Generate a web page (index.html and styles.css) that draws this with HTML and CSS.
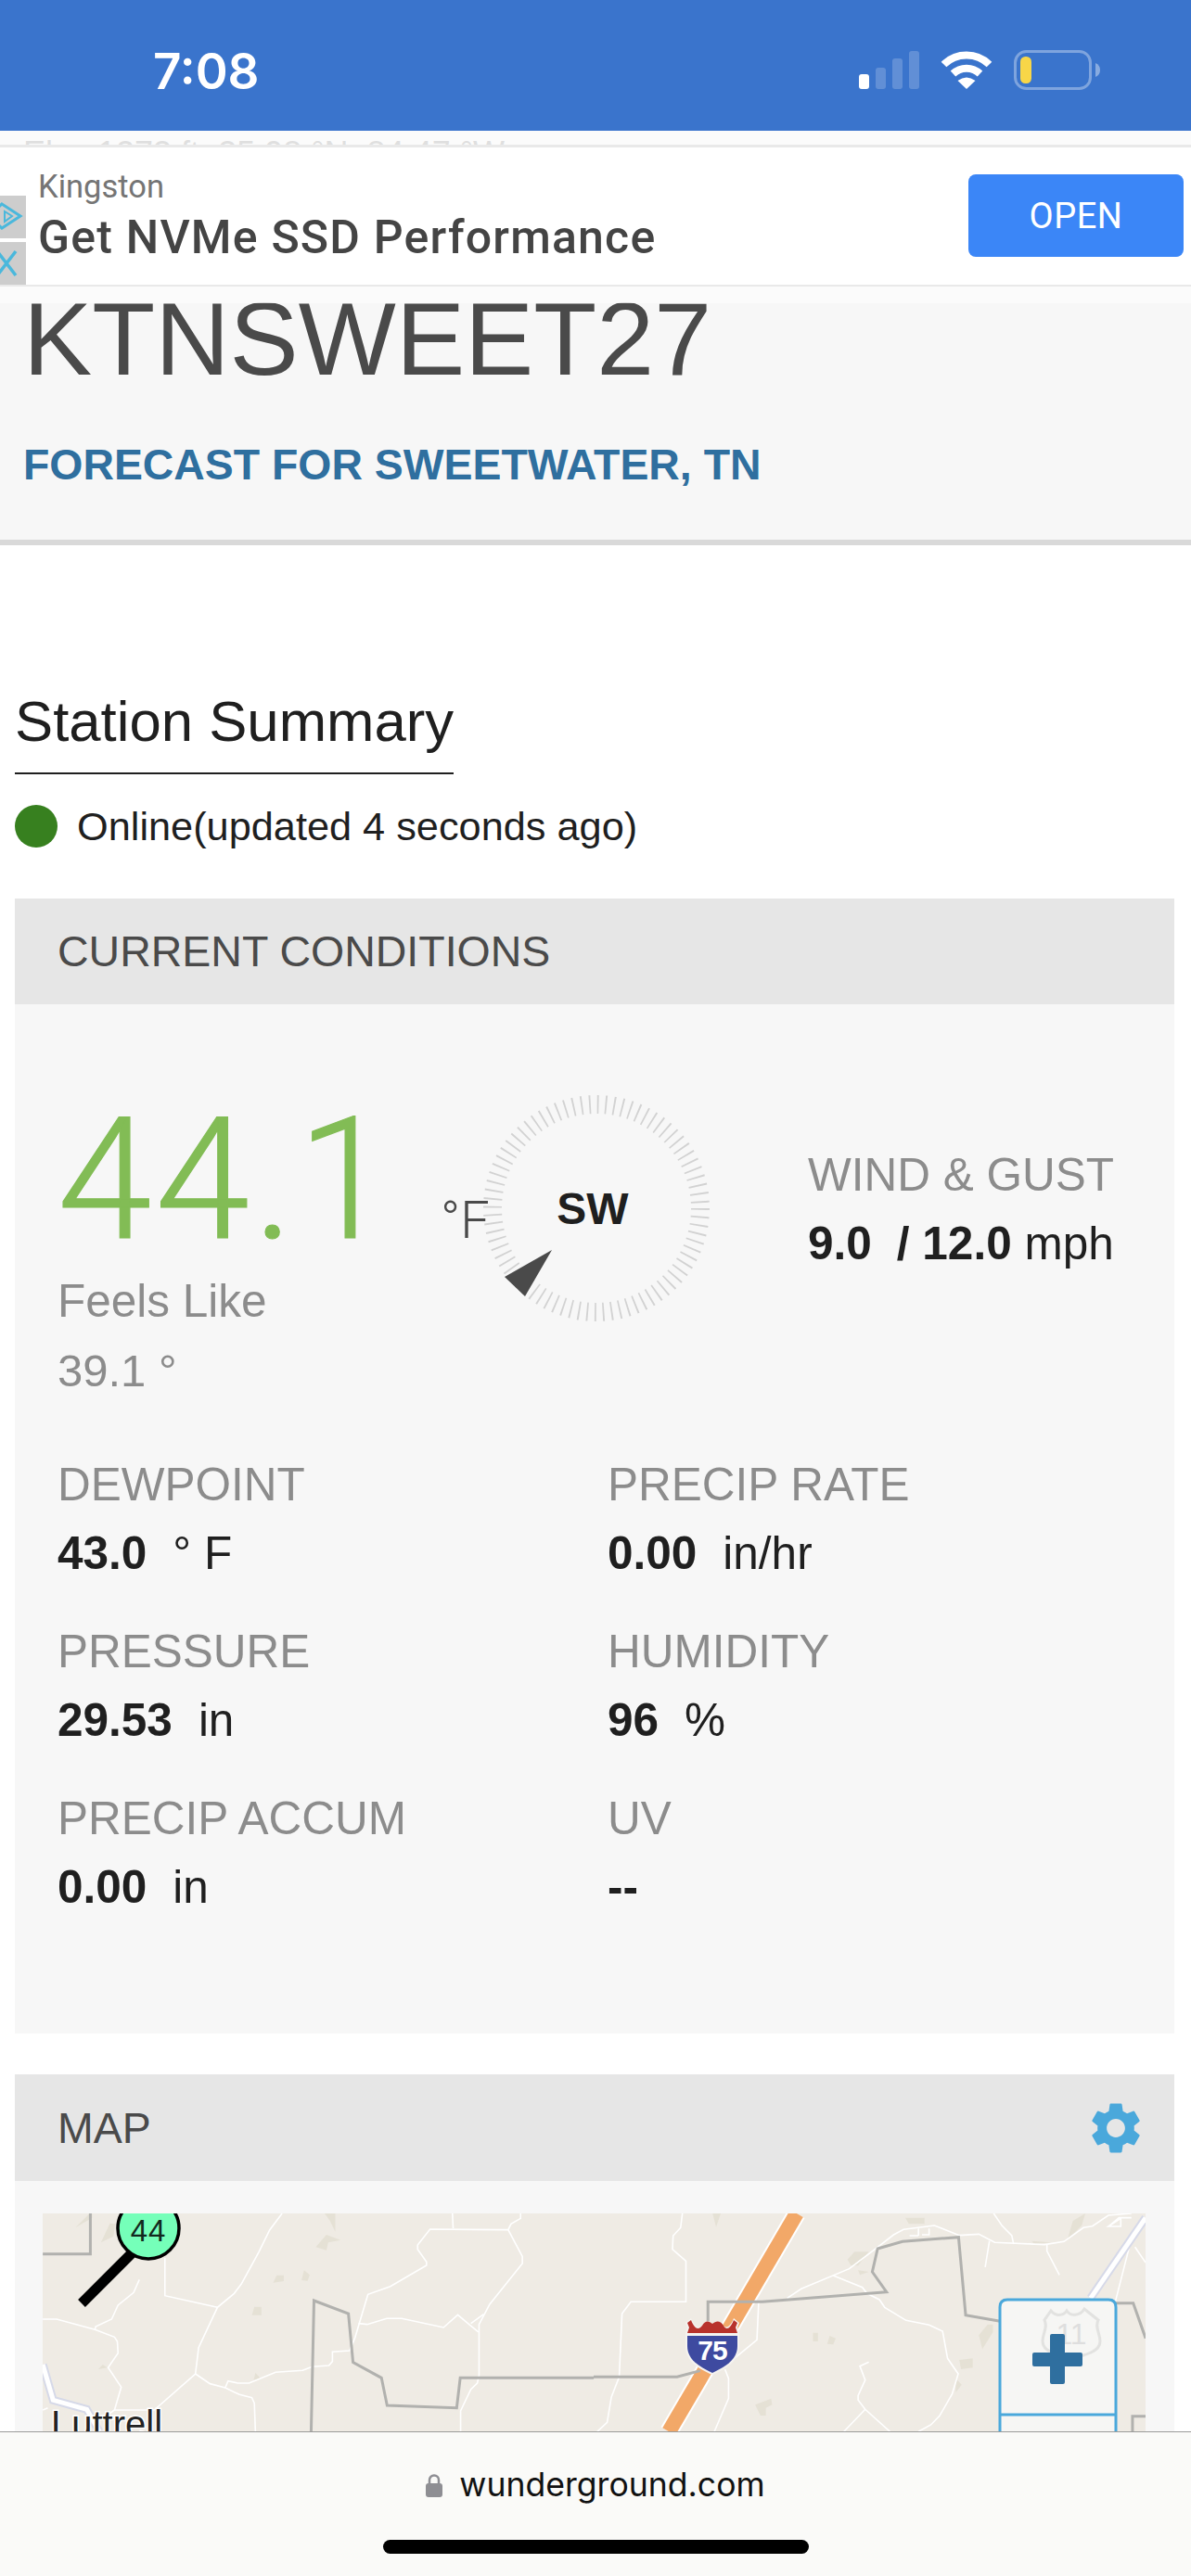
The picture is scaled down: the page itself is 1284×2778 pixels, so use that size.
FILE: index.html
```html
<!DOCTYPE html>
<html lang="en">
<head>
<meta charset="utf-8">
<title>KTNSWEET27</title>
<link rel="stylesheet" href="styles.css">
</head>
<body>
<header class="status">
  <span class="time">7:08</span>
  <div class="status-icons">
    <svg class="signal" width="65" height="41" viewBox="0 0 65 41">
      <rect class="bar-on" x="0" y="25" width="11" height="16" rx="3"/>
      <rect class="bar-off" x="18" y="18" width="11" height="23" rx="3"/>
      <rect class="bar-off" x="36" y="8" width="11" height="33" rx="3"/>
      <rect class="bar-off" x="54" y="0" width="11" height="41" rx="3"/>
    </svg>
    <svg class="wifi" width="58" height="42" viewBox="0 0 58 42">
      <path d="M4.500 15.500A35 35 0 0 1 53.500 15.500" fill="none" stroke="#fff" stroke-width="8"/>
      <path d="M14.500 25.500A21 21 0 0 1 43.500 25.500" fill="none" stroke="#fff" stroke-width="8"/>
      <path d="M29 42L19.500 33Q29 26 38.500 33Z" fill="#fff"/>
    </svg>
    <svg class="battery" width="93" height="43" viewBox="0 0 93 43">
      <rect x="1.500" y="1.500" width="81" height="40" rx="12" fill="none" stroke="#fff" stroke-opacity=".35" stroke-width="3"/>
      <rect x="7" y="7" width="12" height="29" rx="5.500" fill="#f8d648"/>
      <path d="M88 14Q93 16 93 21.500Q93 27 88 29Z" fill="#fff" fill-opacity=".4"/>
    </svg>
  </div>
</header>

<section class="station-head">
  <p class="elev">Elev 1273 ft, 35.98 °N, 84.47 °W</p>
  <h1 class="station-id">KTNSWEET27</h1>
  <a class="forecast-link">FORECAST FOR SWEETWATER, TN</a>
</section>

<main class="content">
  <h2 class="summary-title">Station Summary</h2>
  <div class="online"><span class="online-dot"></span><span>Online(updated 4 seconds ago)</span></div>

  <section class="panel">
    <h3 class="panel-head">CURRENT CONDITIONS</h3>
    <div class="conditions">
      <div class="top-row">
        <div class="temp-col">
          <div class="temp">44.1</div>
          <div class="label">Feels Like</div>
          <div class="feels">39.1 °</div>
        </div>
        <div class="compass">
          <svg width="250" height="250" viewBox="0 0 250 250">
            <circle class="ticks" cx="125" cy="125" r="112"/>
            <path class="needle" d="M77 170L26 199L48 220Z"/>
            <text class="compass-dir" x="121" y="142" text-anchor="middle">SW</text>
          </svg>
          <span class="temp-unit">°F</span>
        </div>
        <div class="wind-col">
          <div class="label">WIND &amp; GUST</div>
          <div class="value"><b>9.0</b><b class="gust">/ 12.0</b> <span>mph</span></div>
        </div>
      </div>
      <div class="stats">
        <div class="stat"><div class="label">DEWPOINT</div><div class="value"><b>43.0</b><span class="unit">° F</span></div></div>
        <div class="stat"><div class="label">PRECIP RATE</div><div class="value"><b>0.00</b><span class="unit">in/hr</span></div></div>
        <div class="stat"><div class="label">PRESSURE</div><div class="value"><b>29.53</b><span class="unit">in</span></div></div>
        <div class="stat"><div class="label">HUMIDITY</div><div class="value"><b>96</b><span class="unit">%</span></div></div>
        <div class="stat"><div class="label">PRECIP ACCUM</div><div class="value"><b>0.00</b><span class="unit">in</span></div></div>
        <div class="stat"><div class="label">UV</div><div class="value"><b>--</b></div></div>
      </div>
    </div>
  </section>

  <section class="panel map-panel">
    <h3 class="panel-head">MAP
      <svg class="gear" width="66" height="66" viewBox="0 0 24 24"><path d="M19.140 12.940c.04-.3.06-.61.06-.94 0-.32-.02-.64-.07-.94l2.030-1.580c.18-.14.23-.41.12-.61l-1.920-3.320c-.12-.22-.37-.29-.59-.22l-2.390.96c-.5-.38-1.030-.7-1.620-.94l-.36-2.540c-.04-.24-.24-.41-.48-.41h-3.840c-.24 0-.43.17-.47.41l-.36 2.540c-.59.24-1.130.57-1.620.94l-2.390-.96c-.22-.08-.47 0-.59.22L2.740 8.870c-.12.21-.08.47.12.61l2.030 1.580c-.05.3-.09.63-.09.94s.02.64.07.94l-2.030 1.580c-.18.14-.23.41-.12.61l1.920 3.320c.12.22.37.29.59.22l2.390-.96c.5.38 1.030.7 1.620.94l.36 2.540c.05.24.24.41.48.41h3.840c.24 0 .44-.17.47-.41l.36-2.540c.59-.24 1.130-.56 1.620-.94l2.390.96c.22.08.47 0 .59-.22l1.920-3.320c.12-.22.07-.47-.12-.61l-2.010-1.580zM12 15.600c-1.980 0-3.600-1.620-3.600-3.600s1.620-3.600 3.600-3.600 3.600 1.620 3.600 3.600-1.620 3.600-3.600 3.600z"/></svg>
    </h3>
    <div class="map-wrap">
      <svg class="map" width="1189" height="300" viewBox="46 2387 1189 300">
        <rect x="46" y="2387" width="1189" height="300" fill="#efebe4"/>
        <g transform="translate(40 2375) scale(.3827 .3333)">
          <path class="land" d="M810 36L840 36V95L825 60ZM785 145L815 105L855 122L820 130L815 155ZM665 260L675 236H695V255ZM745 252L752 220L768 235L762 254ZM605 365L612 338H632V365ZM180 130L205 68L220 70L215 110ZM108 82L145 40L155 36V50ZM172 540L185 525L198 535ZM610 575L615 552L630 570Z"/>
          <path class="road" d="M690 36L655 90L625 160L575 265L555 295L508 340L455 470L446 555L330 672L218 672"/>
          <path class="road" d="M360 180V302L508 340"/>
          <path class="road" d="M288 250L272 292L228 333L210 378L165 402L163 412"/>
          <path class="road" d="M16 378H55L163 412L218 436L226 450L228 488L200 535L237 598L218 672L190 695"/>
          <path class="road" d="M446 555L487 587L530 600L570 622L605 632L612 650L615 742"/>
          <path class="road" d="M530 600L538 578L565 585H597L672 550L748 544L775 532L822 528L832 515V484L880 480L895 440L932 298L995 272L1097 204V193L1072 152V138L1107 87L1327 89L1367 175V198L1275 330L1245 395V560L1240 585L1222 605L1193 675V742"/>
          <path class="road" d="M1170 36L1172 85M1362 36V52L1335 70L1327 89M1222 392L1258 362M16 672L30 665"/>
          <path class="road" d="M905 392L930 395L985 376H1027L1145 405L1185 364L1243 420"/>
          <path class="highway-edge" d="M16 525L45 640L140 670L175 742"/>
          <path class="highway" d="M16 525L45 640L140 670L175 742"/>
          <path class="border" d="M16 167H150V36"/>
          <path class="border" d="M772 742L780 318L877 360L890 518L970 568L986 657L1182 665L1192 568H1568"/>
        </g>
        <g transform="translate(640 2375) scale(.3827 .3333)">
          <path class="land" d="M335 36H358L345 80ZM878 50H932V70H888ZM715 185L735 160H775L745 205H725ZM745 220L775 225L750 235ZM1340 100L1350 60L1385 36L1375 75L1335 120ZM1235 125L1290 130L1240 135ZM618 422H632V450H618ZM658 458L665 432L682 440L675 460ZM1085 430L1110 395H1125V420L1095 475ZM1030 510L1068 505V535L1035 540ZM455 655L500 635L503 655L485 665V690H470ZM1020 570L1037 590L1020 615Z"/>
          <path class="road" d="M250 36L245 82L224 108L222 152L260 190V322H105L80 360L72 565L50 630L38 712L10 742"/>
          <path class="road" d="M465 322L460 445L370 530M370 540L380 570V635L340 742"/>
          <path class="road" d="M545 310L585 280L720 215L800 145L845 105L873 88L960 75L1030 107L1085 103L1130 130L1270 137L1325 127L1380 82L1405 77L1450 42L1515 36"/>
          <path class="road" d="M675 237L757 275L770 295L805 315L820 340L880 382L945 397L983 417L997 505L1027 555L1010 620L975 690L950 720L915 742"/>
          <path class="road" d="M775 517L750 530L765 575L745 625V640L765 670L835 742M765 670L705 742"/>
          <path class="road" d="M1115 125L1103 210M1277 137V158L1312 235M1127 36L1150 75L1178 108L1183 135"/>
          <path class="road" d="M915 108V85M890 108H915M945 85V105H925M1450 78L1480 50H1515M1485 52V78H1450Z"/>
          <path class="road" d="M1510 140L1470 320M1525 145L1555 195"/>
          <path class="interstate-edge" d="M572 36L212 742"/>
          <path class="interstate" d="M572 36L212 742"/>
          <path class="border" d="M0 565H235L300 545"/>
          <path class="border" d="M322 385V322H475L825 290L785 225L800 150L870 127L1028 113L1048 365L1145 385"/>
          <path class="highway-edge" d="M1400 310L1555 50"/>
          <path class="highway" d="M1400 310L1555 50"/>
          <path class="border" d="M1470 326H1520L1555 440M1555 692H1518V742"/>
        </g>

        <path class="pin-stem" d="M142 2430L88 2484"/>
        <circle class="pin-head" cx="160" cy="2403" r="33"/>
        <text class="pin-text" x="160" y="2417" text-anchor="middle">44</text>
        <text class="town" x="55" y="2628">Luttrell</text>

        <path class="shield-edge" d="M768 2561C752 2554 739 2546 739 2530V2516L741 2510L739 2505L745 2500C749 2510 753 2511 757 2508C761 2511 775 2511 780 2508C783 2511 787 2510 791 2500L797 2505L795 2510L797 2516V2530C797 2546 784 2554 768 2561Z"/>
        <path class="shield-red" d="M741 2516L743 2510L741 2505L745 2502C749 2512 753 2513 757 2508C761 2502 764 2503 768 2506C772 2503 776 2502 780 2508C783 2513 787 2512 791 2502L795 2505L793 2510L795 2516Z"/>
        <path class="shield-blue" d="M741 2519H795V2530C795 2545 782 2552 768 2559C754 2552 741 2545 741 2530Z"/>
        <text class="shield-text" x="768" y="2545" text-anchor="middle">75</text>

        <path class="zoom-box" d="M1078 2700V2488Q1078 2480 1086 2480H1195Q1203 2480 1203 2488V2700"/>
        <path class="us-shield" d="M1133 2492C1138 2498 1146 2498 1150 2492C1154 2498 1164 2498 1169 2490L1184 2502C1180 2510 1186 2516 1186 2525C1186 2536 1170 2540 1155 2543C1140 2540 1124 2536 1124 2525C1124 2516 1130 2510 1126 2502Z"/>
        <text class="us-text" x="1155" y="2528" text-anchor="middle">11</text>
        <path class="zoom-plus" d="M1132 2519Q1132 2517 1134 2517H1146Q1148 2517 1148 2519V2537H1165Q1167 2537 1167 2539V2550Q1167 2552 1165 2552H1148V2569Q1148 2571 1146 2571H1134Q1132 2571 1132 2569V2552H1115Q1113 2552 1113 2550V2539Q1113 2537 1115 2537H1132Z"/>
        <path class="zoom-line" d="M1078 2604H1203"/>
      </svg>
    </div>
  </section>
</main>

<aside class="ad-band">
  <div class="ad">
    <div class="ad-tiles">
      <span class="ad-tile"><svg width="28" height="45" viewBox="0 0 28 45"><path d="M2 9L22 22L2 35L-12 22Z" fill="none" stroke="#4ab8dc" stroke-width="3"/><path d="M5 17L13 22L5 28Z" fill="none" stroke="#4ab8dc" stroke-width="2"/></svg></span>
      <span class="ad-tile"><svg width="28" height="46" viewBox="0 0 28 46"><path d="M-3 10L17 36M17 10L-3 36" fill="none" stroke="#4ab8dc" stroke-width="3.500"/></svg></span>
    </div>
    <div class="ad-copy">
      <div class="ad-brand">Kingston</div>
      <div class="ad-title">Get NVMe SSD Performance</div>
    </div>
    <button class="ad-open">OPEN</button>
  </div>
</aside>

<footer class="safari">
  <div class="address">
    <svg width="18" height="25" viewBox="0 0 18 25"><path d="M4 11V6.500a5 5 0 0 1 10 0V11" fill="none" stroke="#8e8e93" stroke-width="2.500"/><rect y="10" width="18" height="15" rx="3" fill="#8e8e93"/></svg>
    <span>wunderground.com</span>
  </div>
  <div class="home-indicator"></div>
</footer>
</body>
</html>
```

FILE: styles.css
```css
* { box-sizing: border-box; }
html, body { margin: 0; padding: 0; }
body {
  position: relative;
  width: 1284px;
  height: 2778px;
  overflow: hidden;
  background: #fff;
  font-family: "Liberation Sans", Arial, sans-serif;
  color: #1f1f1f;
}

/* status bar */
.status {
  display: flex;
  align-items: flex-start;
  height: 141px;
  padding: 54px 98px 0 165px;
  background: #3a74cc;
  color: #fff;
}
.time { font: 600 53px/46px Inter, sans-serif; }
.status-icons { display: flex; align-items: flex-start; gap: 22px; margin-left: auto; }
.signal { margin-top: 1px; }
.bar-on { fill: #fff; }
.bar-off { fill: #fff; fill-opacity: .2; }

/* station header */
.station-head {
  padding: 5px 0 51px 25px;
  background: #f7f7f7;
  border-bottom: 6px solid #d9d9d9;
}
.elev { margin: 0; font-size: 36px; line-height: 40px; color: #777; }
.station-id {
  margin: 120px 0 0;
  font-size: 111.300px;
  line-height: 120px;
  font-weight: 400;
  color: #4a4a4a;
}
.forecast-link {
  display: block;
  margin-top: 45px;
  font-size: 46.400px;
  line-height: 60px;
  font-weight: 700;
  color: #2f6f9f;
}

/* content */
.content { padding: 0 18px 0 16px; }
.summary-title {
  display: inline-block;
  margin: 155px 0 0;
  padding-bottom: 20px;
  font-size: 61.700px;
  line-height: 70px;
  font-weight: 400;
  border-bottom: 2px solid #1f1f1f;
}
.online {
  display: flex;
  align-items: center;
  gap: 21px;
  height: 46px;
  margin-top: 33px;
  font-size: 43.300px;
}
.online-dot { width: 46px; height: 46px; border-radius: 50%; background: #37801f; }

.panel { margin-top: 55px; background: #f7f7f7; }
.panel-head {
  display: flex;
  align-items: center;
  justify-content: space-between;
  height: 114px;
  margin: 0;
  padding: 0 30px 0 46px;
  background: #e6e6e6;
  font-size: 46.500px;
  font-weight: 400;
  color: #4a4a4a;
}
.gear { fill: #4aa8db; }

.conditions { height: 1110px; padding: 90px 46px 0; }
.top-row { display: flex; align-items: flex-start; }
.temp-col { width: 456px; flex: none; }
.temp {
  height: 200px;
  font: 300 183px/200px Roboto, sans-serif;
  letter-spacing: 4px;
  -webkit-text-stroke: 1.200px #82bc55;
  color: #82bc55;
}
.label { font-size: 49.500px; line-height: 60px; color: #8c8c8c; }
.feels { margin-top: 15px; font-size: 49px; line-height: 60px; color: #8c8c8c; }

.compass { position: relative; width: 250px; height: 250px; margin-top: 5px; flex: none; }
.ticks { fill: none; stroke: #d2d2d2; stroke-width: 20; stroke-dasharray: 1.800 7; }
.needle { fill: #4a4a4a; }
.compass-dir { font-size: 48px; font-weight: 700; fill: #1f1f1f; }
.temp-unit {
  position: absolute;
  left: -43px;
  top: 106px;
  font: 300 56px/64px Roboto, sans-serif;
  color: #4a4a4a;
}

.wind-col { margin: 64px 0 0 103px; white-space: nowrap; }
.value { margin-top: 14px; font-size: 49.500px; line-height: 60px; color: #1f1f1f; white-space: nowrap; }
.gust { margin-left: 27px; }
.unit { margin-left: 28px; }

.stats {
  display: grid;
  grid-template-columns: 593px 1fr;
  row-gap: 46px;
  margin-top: 63px;
}

.map-panel { margin-top: 44px; }
.map-panel .panel-head { height: 115px; }
.map-wrap { padding: 35px 30px 0; }
.map { display: block; }
.road { fill: none; stroke: #fff; stroke-width: 1.600; vector-effect: non-scaling-stroke; }
.land { fill: #e5e1d5; stroke: none; }
.border { fill: none; stroke: #b1b1ae; stroke-width: 3; vector-effect: non-scaling-stroke; }
.highway-edge { fill: none; stroke: #d6d9e8; stroke-width: 9; vector-effect: non-scaling-stroke; }
.highway { fill: none; stroke: #fff; stroke-width: 5; vector-effect: non-scaling-stroke; }
.interstate-edge { fill: none; stroke: #fff; stroke-width: 20; vector-effect: non-scaling-stroke; }
.interstate { fill: none; stroke: #f2a868; stroke-width: 16; vector-effect: non-scaling-stroke; }
.pin-stem { fill: none; stroke: #000; stroke-width: 11; }
.pin-head { fill: #75ffb9; stroke: #000; stroke-width: 3.500; }
.pin-text { font-size: 33px; letter-spacing: 1px; fill: #12291e; }
.town { font-size: 40px; fill: #222; stroke: #fff; stroke-width: 3; paint-order: stroke; }
.shield-edge { fill: #f5f3f0; }
.shield-red { fill: #b8322c; }
.shield-blue { fill: #3e4aa0; }
.shield-text { font-size: 30px; font-weight: 700; fill: #fff; letter-spacing: -1px; }
.zoom-box { fill: #f6f6f5; fill-opacity: .92; stroke: #4aa8db; stroke-width: 3; }
.us-shield { fill: none; stroke: #e2e2e0; stroke-width: 3; }
.us-text { font-size: 32px; fill: #dedede; }
.zoom-plus { fill: #2f6f9f; }
.zoom-line { fill: none; stroke: #4aa8db; stroke-width: 3; }

/* ad overlay */
.ad-band {
  position: absolute;
  left: 0;
  top: 141px;
  width: 100%;
  height: 186px;
  padding-top: 15px;
  background: rgba(252, 252, 252, .78);
}
.ad {
  display: flex;
  height: 153px;
  padding-right: 8px;
  background: #fff;
  border-top: 3px solid #e9e9e9;
  border-bottom: 2px solid #e9e9e9;
}
.ad-tiles { display: flex; flex-direction: column; justify-content: flex-end; gap: 4px; width: 28px; flex: none; }
.ad-tile { display: block; height: 46px; background: #cdcdcd; overflow: hidden; }
.ad-tile svg { display: block; }
.ad-copy { margin-left: 13px; padding-top: 22px; font-family: Roboto, sans-serif; }
.ad-brand { font-size: 34.500px; line-height: 40px; color: #757575; }
.ad-title { margin-top: 7px; font-size: 50px; line-height: 56px; font-weight: 500; color: #444; white-space: nowrap; letter-spacing: 1.200px; }
.ad-open {
  width: 232px;
  height: 89px;
  margin: 29px 0 0 auto;
  border: 0;
  border-radius: 8px;
  background: #3b86f7;
  color: #fff;
  font: 400 38px Roboto, sans-serif;
  letter-spacing: .5px;
}

/* safari bar */
.safari {
  position: absolute;
  left: 0;
  bottom: 0;
  width: 100%;
  height: 156px;
  padding-top: 37px;
  background: #fafaf8;
  border-top: 1px solid #9a9a9a;
}
.address {
  display: flex;
  align-items: center;
  justify-content: center;
  gap: 18px;
  height: 40px;
  font: 400 35.600px/40px Inter, sans-serif;
  color: #111;
}
.home-indicator {
  width: 459px;
  height: 15px;
  margin: 39px auto 0;
  border-radius: 8px;
  background: #000;
}
```
